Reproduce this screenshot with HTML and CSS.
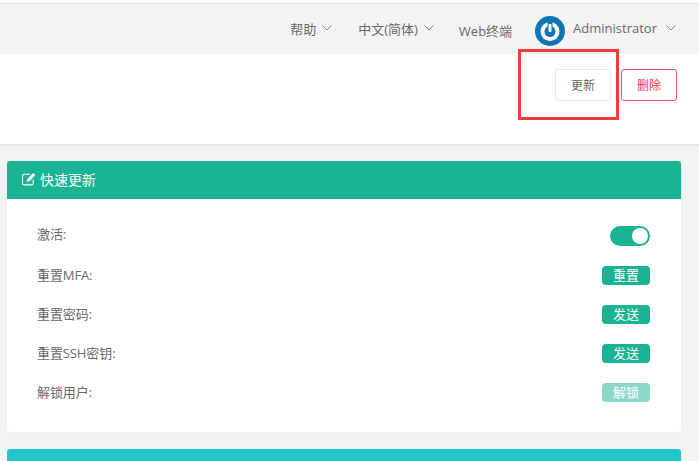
FILE: index.html
```html
<!DOCTYPE html>
<html lang="zh">
<head>
<meta charset="utf-8">
<title>更新用户</title>
<link rel="stylesheet" href="styles.css">
</head>
<body>
<div class="page">
  <nav class="navbar">
    <span class="nav-item">帮助<svg class="caret" viewBox="0 0 10 6"><path d="M.5.5 5 5 9.500.5"/></svg></span>
    <span class="nav-item">中文(简体)<svg class="caret" viewBox="0 0 10 6"><path d="M.5.5 5 5 9.500.5"/></svg></span>
    <span class="nav-item web">Web终端</span>
    <span class="nav-item user">
      <svg class="avatar" viewBox="0 0 30 30"><circle cx="15" cy="15" r="15" fill="#0f75b5"/><circle cx="15" cy="15.500" r="9.500" fill="#fff"/><circle cx="15" cy="15.500" r="5.500" fill="#0f75b5"/><rect x="12.500" y="5" width="5" height="6" fill="#0f75b5"/><rect x="13.500" y="8" width="3" height="8" rx="1" fill="#fff"/></svg>
      <span class="username">Administrator</span><svg class="caret" viewBox="0 0 10 6"><path d="M.5.5 5 5 9.500.5"/></svg>
    </span>
  </nav>
  <header class="action-bar">
    <button class="btn btn-default">更新</button>
    <button class="btn btn-danger">删除</button>
    <div class="highlight"></div>
  </header>
  <main class="content">
    <section class="card">
      <h2 class="card-title">
        <svg class="edit-icon" viewBox="0 0 14 13"><path class="edit-box" d="M10.500 7.500v3a1.500 1.500 0 0 1-1.500 1.500H2a1.500 1.500 0 0 1-1.500-1.500V3.500A1.500 1.500 0 0 1 2 2h5.500"/><path class="edit-pen" d="M5 6.500 10.500 1l2 2L7 8.500l-2.500.5z"/></svg>
        快速更新
      </h2>
      <div class="card-body">
        <div class="row row-switch"><span class="label">激活:</span><span class="switch"><span class="knob"></span></span></div>
        <div class="row"><span class="label">重置MFA:</span><button class="tag">重置</button></div>
        <div class="row"><span class="label">重置密码:</span><button class="tag">发送</button></div>
        <div class="row"><span class="label">重置SSH密钥:</span><button class="tag">发送</button></div>
        <div class="row"><span class="label">解锁用户:</span><button class="tag tag-off">解锁</button></div>
      </div>
    </section>
    <section class="card-next"></section>
  </main>
</div>
</body>
</html>
```
FILE: styles.css
```css
* { box-sizing: border-box; }
html, body { margin: 0; height: 100%; overflow: hidden; }
body {
  background: #f3f3f4;
  color: #676a6c;
  font-family: "Open Sans", "Noto Sans CJK SC", sans-serif;
  font-size: 13px;
}
.page { width: 699px; height: 461px; padding-top: 3px; overflow: hidden; background: linear-gradient(#fff 3px, #f3f3f4 3px); }
.navbar {
  height: 51px;
  border-top: 1px solid #e0e0e0;
  display: flex;
  align-items: center;
  justify-content: flex-end;
  padding: 0 23px 2px 0;
  background: #f3f3f4;
}
.nav-item { display: flex; align-items: center; white-space: nowrap; }
.nav-item + .nav-item { margin-left: 26px; }
.nav-item.web { margin-left: 25px; margin-top: 4px; }
.nav-item.user { margin-left: 23px; }
.caret { width: 10px; height: 6px; margin-left: 6px; fill: none; stroke: #676a6c; stroke-width: .8; }
.avatar { width: 30px; height: 30px; margin: 6px 8px 0 0; }
.username + .caret { margin-left: 9px; }
.action-bar {
  position: relative;
  height: 92px;
  background: #fff;
  border-bottom: 2px solid #e7eaec;
  display: flex;
  justify-content: flex-end;
  align-items: flex-start;
  gap: 10px;
  padding: 15px 22px 0 0;
}
.btn {
  width: 56px;
  height: 32px;
  border-radius: 3px;
  background: #fff;
  font: inherit;
  font-size: 12px;
  padding: 0;
}
.btn-default { border: 1px solid #e7eaec; color: #676a6c; }
.btn-danger { border: 1px solid #ed5565; color: #f0394c; }
.highlight {
  position: absolute;
  left: 518px;
  top: -5px;
  width: 101px;
  height: 71px;
  border: 3px solid #f63a3a;
}
.content { padding: 15px 18px 0 7px; }
.card { background: #fff; border-radius: 3px; box-shadow: 0 0 1px rgba(103,106,108,.3); }
.card-title {
  height: 38px;
  margin: 0;
  padding: 0 0 3px 15px;
  display: flex;
  align-items: center;
  gap: 3px;
  background: #1ab394;
  color: #fff;
  font-size: 14px;
  font-weight: 400;
  border-radius: 3px 3px 0 0;
}
.edit-icon { width: 15px; height: 14px; }
.edit-box { fill: none; stroke: #fff; stroke-width: 1; }
.edit-pen { fill: #fff; }
.card-body { height: 233px; padding: 18px 31px 0 30px; }
.row { height: 39px; display: flex; align-items: center; justify-content: space-between; }
.row-switch .label { margin-bottom: 7px; }
.row-switch .switch { margin-bottom: 1px; }
.label { font-size: 13px; letter-spacing: -.1px; margin-bottom: 3px; }
.switch {
  width: 40px;
  height: 20px;
  border-radius: 10px;
  background: #1ab394;
  display: flex;
  align-items: center;
  justify-content: flex-end;
  padding-right: 2px;
}
.knob { width: 16px; height: 16px; border-radius: 50%; background: #fff; }
.tag {
  width: 48px;
  height: 19px;
  border: 0;
  border-radius: 4px;
  background: #1ab394;
  color: #fff;
  font: inherit;
  font-size: 13px;
  line-height: 19px;
  padding: 0;
}
.tag-off { background: #8cd9c9; }
.card-next { height: 40px; margin-top: 17px; background: #23c6c8; border-radius: 3px 3px 0 0; }
```
